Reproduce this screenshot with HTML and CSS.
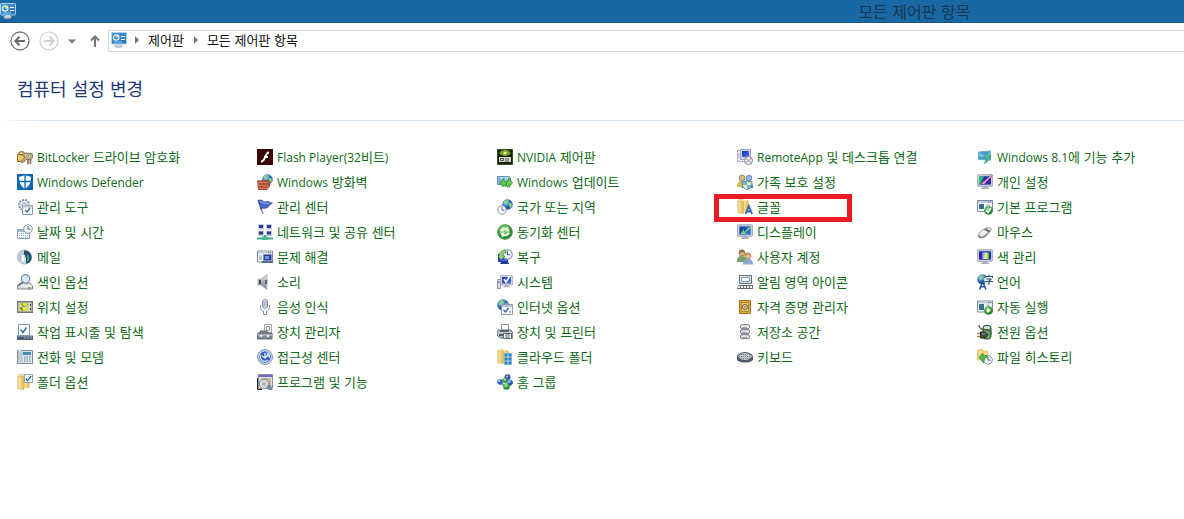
FILE: index.html
```html
<!DOCTYPE html>
<html lang="ko">
<head>
<meta charset="utf-8">
<title>모든 제어판 항목</title>
<link rel="stylesheet" href="styles.css">
</head>
<body>
<svg class="defs" aria-hidden="true">
  <defs>
    <linearGradient id="gold" x1="0" x2="1"><stop offset="0" stop-color="#f9ebb0"/><stop offset="1" stop-color="#dfb850"/></linearGradient>
    <linearGradient id="screen" x1="0" y1="0" x2="1" y2="1"><stop offset="0" stop-color="#1b2cb8"/><stop offset="1" stop-color="#4a78e8"/></linearGradient>
    <linearGradient id="panel" x1="0" y1="0" x2="1" y2="1"><stop offset="0" stop-color="#4a9bd8"/><stop offset="1" stop-color="#2173b8"/></linearGradient>
    <linearGradient id="steel" x1="0" y1="0" x2="0" y2="1"><stop offset="0" stop-color="#e2e6ea"/><stop offset="1" stop-color="#727c88"/></linearGradient>
    <radialGradient id="ball" cx=".35" cy=".3"><stop offset="0" stop-color="#cdeaff"/><stop offset=".5" stop-color="#4b9bdc"/><stop offset="1" stop-color="#1c4d9c"/></radialGradient>
    <radialGradient id="leaf" cx=".4" cy=".3"><stop offset="0" stop-color="#b7eca0"/><stop offset="1" stop-color="#288a2e"/></radialGradient>
    <linearGradient id="rainbow"><stop offset="0" stop-color="#e638d8"/><stop offset=".3" stop-color="#8bd9f5"/><stop offset=".6" stop-color="#fff25c"/><stop offset="1" stop-color="#28b848"/></linearGradient>
    <symbol id="cpl" viewBox="0 0 16 16">
      <ellipse cx="7.500" cy="14" rx="4" ry="1.800" fill="#b9bfc4"/><path d="M6 11h4v3H6z" fill="#d9dde0"/>
      <rect x=".5" y=".5" width="15" height="11.500" rx=".8" fill="url(#panel)" stroke="#a7d4f2"/>
      <circle cx="5.200" cy="5.500" r="2.700" fill="none" stroke="#e4f4fc" stroke-width="1.200"/><path d="M5 5.500V3A2.500 2.500 0 0 1 7.500 5.500z" fill="#f5d65a"/>
      <path d="M10 4.500h4M10 7.500h4" stroke="#fff" stroke-width="1.200"/><path d="M3 10h8" stroke="#8ec7ee"/>
    </symbol>
    <symbol id="clock" viewBox="0 0 10 10"><circle cx="5" cy="5" r="4.300" fill="#f5f8fb" stroke="#8796a8"/><path d="M5 2v3.200h2.500" fill="none" stroke="#52667d"/></symbol>
    <symbol id="globe" viewBox="0 0 12 12"><circle cx="6" cy="6" r="5.500" fill="url(#ball)" stroke="#5c96c8" stroke-width=".6"/><path d="M3 2l3-1 1 2-2 2-3 1zM7 5l3-1 1 3-2 3-1-2z" fill="#8ccf7c"/></symbol>
    <symbol id="pc" viewBox="0 0 16 16"><path d="M6 12h4v1.500h2V15H4v-1.500h2z" fill="#aab0b8"/><rect x=".7" y=".8" width="14.600" height="11.400" rx=".5" fill="#d5d8df" stroke="#9da2ad"/><path d="M2.500 2.500h11v8h-11z" fill="url(#screen)"/></symbol>
    <symbol id="window" viewBox="0 0 16 12"><path d="M.5.500h15v11H.5z" fill="#f8fafc" stroke="#7d8a9b"/><path d="M1 1h14v2H1z" fill="#c0ccd9"/><path d="M11 2h1M13 2h1" stroke="#54657a"/></symbol>
    <symbol id="tick" viewBox="0 0 10 10"><path d="M.5.500h9v9h-9z" fill="#fff" stroke="#8290a5"/><path d="M2 5l2 2.500L8 2" fill="none" stroke="#245fa9" stroke-width="1.400"/></symbol>
    <symbol id="folder" viewBox="0 0 14 16"><path d="M1 1l5-1v14l-5 1z" fill="#f7e7a6" stroke="#d5b55b" stroke-width=".6"/><path d="M6 1.500h6.500V14H6z" fill="url(#gold)"/><path d="M1 3l6-1v13.500L1 15z" fill="url(#gold)" stroke="#d1a946" stroke-width=".5"/></symbol>
  </defs>
</svg>

<header class="titlebar">
  <svg class="titlebar-icon" viewBox="0 0 16 16"><use href="#cpl"/></svg>
  <div class="titlebar-text">모든 제어판 항목</div>
</header>

<nav class="toolbar" aria-label="탐색">
  <button class="nav-button" aria-label="뒤로"><svg viewBox="0 0 20 20"><circle cx="10" cy="10" r="9" fill="none" stroke="#777" stroke-width="1.300"/><path d="M15 10H6M9.500 5.800L5.300 10l4.200 4.200" fill="none" stroke="#666" stroke-width="2"/></svg></button>
  <button class="nav-button" aria-label="앞으로"><svg viewBox="0 0 20 20"><circle cx="10" cy="10" r="9" fill="none" stroke="#cdcdcd" stroke-width="1.200"/><path d="M5 10h9M10.500 5.800l4.200 4.200-4.200 4.200" fill="none" stroke="#cfcfcf" stroke-width="2"/></svg></button>
  <button class="small-button" aria-label="최근 위치"><svg viewBox="0 0 8 14"><path d="M0 5.500h8L4 9.500z" fill="#777"/></svg></button>
  <button class="small-button up" aria-label="위로"><svg viewBox="0 0 10 14"><path d="M5 13V3M1 6.500l4-4 4 4" fill="none" stroke="#777" stroke-width="2"/></svg></button>
  <div class="address">
    <svg class="icon" viewBox="0 0 16 16"><use href="#cpl"/></svg>
    <svg class="chevron" viewBox="0 0 4 8"><path d="M0 0l4 4-4 4z" fill="#777"/></svg>
    <a href="#">제어판</a>
    <svg class="chevron" viewBox="0 0 4 8"><path d="M0 0l4 4-4 4z" fill="#777"/></svg>
    <a href="#">모든 제어판 항목</a>
  </div>
</nav>

<main>
  <h1>컴퓨터 설정 변경</h1>
  <ul class="items">
    <li><a href="#"><svg class="icon" viewBox="0 0 16 16"><path d="M2 6V4a3 3 0 0 1 5 0v2" fill="none" stroke="#b08c36" stroke-width="1.600"/><path d="M.5 5.500h7v7h-7z" fill="#e5b443" stroke="#9c7221"/><path d="M1 8h6M1 10h6" stroke="#f8df8c"/><path d="M5 5.500l4-1.500 6 .5 1 4-3 2.500-3-1-5 4-1-1.500 4-4z" fill="#c5b88e" stroke="#6d5c35" stroke-width=".8"/><circle cx="12.500" cy="7" r="1.300" fill="#fff" stroke="#6d5c35" stroke-width=".6"/><path d="M11 10v5.500M13.500 10v5" stroke="#7c6639" stroke-width="1.500"/></svg><span class="latin">BitLocker</span> 드라이브 암호화</a></li>
    <li><a href="#"><svg class="icon" viewBox="0 0 16 16"><path d="M0 0h16v16H0z" fill="#3b0808"/><path d="M12 3.500c-4 0-3.500 9-8 9M7 8h4" fill="none" stroke="#fff" stroke-width="2"/></svg><span class="latin">Flash Player(32</span>비트<span class="latin">)</span></a></li>
    <li><a href="#"><svg class="icon" viewBox="0 0 16 16"><path d="M.5.500h15v15H.5z" fill="#182008" stroke="#38521c"/><path d="M2 4c3-4 9-4 12 0-3 4-9 4-12 0z" fill="#79a51c"/><circle cx="8" cy="4" r="1.600" fill="#efffd0"/><path d="M2 8h12v5H2z" fill="#d6d9cc"/><path d="M3.500 9.500h3v2h-3zM8 10h4M8 12h4" fill="none" stroke="#4b5244"/></svg><span class="latin">NVIDIA</span> 제어판</a></li>
    <li><a href="#"><svg class="icon" viewBox="0 0 16 16"><path d="M.5 1.500h8v11h-8z" fill="#f4f6fb" stroke="#8a94a8" stroke-dasharray="2 1"/><path d="M1.500 5h1M1.500 7h1M1.500 9h1" stroke="#6279b2"/><path d="M3.500.500h10v10h-10z" fill="#d3d8e5" stroke="#9aa3b5"/><path d="M5 2h7v6H5z" fill="url(#screen)"/><circle cx="11.500" cy="11.500" r="4" fill="#f5f6f8" stroke="#7b818b"/><path d="M9 9.500l2 2-2 2M14 9.500l-2 2 2 2" fill="none" stroke="#6a727e"/></svg><span class="latin">RemoteApp</span> 및 데스크톱 연결</a></li>
    <li><a href="#"><svg class="icon" viewBox="0 0 16 16"><path d="M1.500 3L13.500 2v9l-12-.5z" fill="#4c9acb" stroke="#6daac8"/><path d="M2 4l5 2 6-3v5L7 9 2 7z" fill="#79bde2"/><path d="M10 4l4 4-2 .5c0 3-2 5-5 6 2-2 2-4 1.500-5.500L6 9z" fill="#50b9a0" stroke="#248d78" stroke-width=".6"/></svg><span class="latin">Windows 8.1</span>에 기능 추가</a></li>

    <li><a href="#"><svg class="icon" viewBox="0 0 16 16"><path d="M0 0h16v16H0z" fill="#0868b5"/><path d="M8 1.200l5.800 1.500c.3 5-.8 9-5.800 12.100C3 11.700 2 7.700 2.200 2.700z" fill="#fff"/><path d="M8 1v14M2 7.500h12" stroke="#0868b5" stroke-width="1.300"/></svg><span class="latin">Windows Defender</span></a></li>
    <li><a href="#"><svg class="icon" viewBox="0 0 16 16"><use href="#globe" x="5" y="0" width="11" height="11"/><path d="M0 6.500L9 6l4 1v5l-3 4H1z" fill="#a9452e"/><path d="M0 8.500h12M0 11.500h12M1 14.500h10M3 6.500v2M7 6.500v2M2 9v2M5 9v2M9 9v2M3 12v2M7 12v2M10 12v2" stroke="#e3a087" stroke-width=".6"/></svg><span class="latin">Windows</span> 방화벽</a></li>
    <li><a href="#"><svg class="icon" viewBox="0 0 16 16"><path d="M.5 2.500h11l2 1v7H.5z" fill="#81b5dc" stroke="#6792b2"/><path d="M1 3l7 4 5-4" fill="#a9daf0"/><path d="M3 9l4-5v2.500c3 .5 3 4 1 6-.5-1-1-1.500-2-1.500v2zM15.500 8.500l-4-4.500V6.500c-3 .5-3 5-1 7 .2-1.500.5-2 1.500-2v2z" fill="#65c95b" stroke="#25812c" stroke-width=".7"/></svg><span class="latin">Windows</span> 업데이트</a></li>
    <li><a href="#"><svg class="icon" viewBox="0 0 16 16"><circle cx="5" cy="4" r="3" fill="#d5b980" stroke="#857050" stroke-width=".7"/><circle cx="12" cy="4" r="2.800" fill="#8eb8df" stroke="#426d9b" stroke-width=".7"/><path d="M0 13c0-5 2-6 5-6s5 2 5 7z" fill="#d9bb58"/><path d="M5 14c0-6 2-7 6-7s5 3 5 7z" fill="#3787ba"/><path d="M5 7.500c2 .5 4 0 5-1 1 1 3 1.500 5 1 0 4-1 7-5 8.500-4-1.500-5-4.500-5-8.500z" fill="#e5edba" stroke="#397a8e" stroke-width=".8"/><path d="M10 6.500V16c3-1.500 4-3 4.500-5H5.500L5 7.500c2 .5 4 0 5-1z" fill="#58a4d4" opacity=".8"/></svg>가족 보호 설정</a></li>
    <li><a href="#"><svg class="icon" viewBox="0 0 16 16"><use href="#pc"/><path d="M2 2.500h11L4 10.500H2z" fill="#24bb79"/><path d="M7 2.500h7v8H3z" fill="#3427ab"/><path d="M4 9.500c2 0 1-2 3-2L14.500.5l1 1-7 7c0 2-3 2-4.500 1z" fill="#eec1d5" stroke="#a2437b" stroke-width=".7"/></svg>개인 설정</a></li>

    <li><a href="#"><svg class="icon" viewBox="0 0 16 16"><circle cx="7" cy="6" r="5" fill="#e8edf3" stroke="#8d9aaa" stroke-width="2" stroke-dasharray="2 1"/><circle cx="7" cy="6" r="2" fill="#fff" stroke="#8d9aaa"/><path d="M5.500 6.500h10v9h-10z" fill="#f7fafc" stroke="#8d9cae"/><path d="M6 7.500h9" stroke="#b9c8d9" stroke-width="2"/><path d="M8 11l2 2 3-4" fill="none" stroke="#47699a" stroke-width="1.300"/></svg>관리 도구</a></li>
    <li><a href="#"><svg class="icon" viewBox="0 0 16 16"><path d="M1 1l5 14" stroke="#8690a3" stroke-width="1.500"/><path d="M1.500 1.500c4-2 5 3 8 1 2-.5 4 2 6 1.500C12 5 13 8 9 9c-3 1-3-1-5 1.500z" fill="#4a68c8" stroke="#2b419c" stroke-width=".8"/><path d="M3 3c3-1 5 3 9 1" fill="none" stroke="#9db4ef"/></svg>관리 센터</a></li>
    <li><a href="#"><svg class="icon" viewBox="0 0 16 16"><use href="#globe" x="5" y="0" width="11" height="11"/><use href="#clock" x="0" y="6" width="10" height="10"/></svg>국가 또는 지역</a></li>
    <li class="highlighted"><a href="#"><svg class="icon" viewBox="0 0 16 16"><use href="#folder" x="0" y="0" width="13" height="15"/><path d="M8.500 15l3.300-8 3.300 8M9.700 12.500h4" fill="none" stroke="#3467b5" stroke-width="1.900"/></svg>글꼴</a></li>
    <li><a href="#"><svg class="icon" viewBox="0 0 16 16"><use href="#window" x="0" y="1" width="16" height="12"/><path d="M2 5h5v5H2z" fill="#376d91"/><path d="M9 5h4v6H9z" fill="#c9d4df"/><circle cx="11.500" cy="11.500" r="4" fill="url(#leaf)" stroke="#398840" stroke-width=".6"/><path d="M9 11.500l2 2L14 9" fill="none" stroke="#fff" stroke-width="1.500"/></svg>기본 프로그램</a></li>

    <li><a href="#"><svg class="icon" viewBox="0 0 16 16"><path d="M.5 5.500h12v9H.5z" fill="#f7fbff" stroke="#8ba0b8"/><path d="M1 6h11v2H1z" fill="#a5bacf"/><path d="M2 9.500h9M2 11.500h9M2 13.500h9" stroke="#87add3" stroke-dasharray="1 1"/><use href="#clock" x="6" y="0" width="10" height="10"/></svg>날짜 및 시간</a></li>
    <li><a href="#"><svg class="icon" viewBox="0 0 16 16"><path d="M1 0h6v5.500H1zM9 0h6v5.500H9zM1 6.500h6V12H1zM9 6.500h6V12H9z" fill="#c4cbe0"/><path d="M2 1h4v3H2zM10 1h4v3h-4zM2 7.500h4v3H2zM10 7.500h4v3h-4z" fill="#263a9c"/><path d="M0 14.500h16M8 11v4" stroke="#43ae87" stroke-width="2"/><path d="M5 12.500h6V16H5z" fill="#4ab790"/></svg>네트워크 및 공유 센터</a></li>
    <li><a href="#"><svg class="icon" viewBox="0 0 16 16"><circle cx="8" cy="8" r="7.300" fill="url(#leaf)" stroke="#3c9440"/><path d="M3 7.500c.5-3 3.500-4.500 6-3.500l1.500-1.500L13 7.500H8L9.500 6C8 5.500 6.500 6 6 7.500zM13 8.500c-.5 3-3.500 4.500-6 3.500l-1.500 1.500L3 8.500h5L6.500 10c1.500.5 3 0 3.500-1.500z" fill="#e9f9df"/></svg>동기화 센터</a></li>
    <li><a href="#"><svg class="icon" viewBox="0 0 16 16"><use href="#pc"/><path d="M2.500 2.500h11v8h-11z" fill="#2a6be0"/><path d="M3 3.500h6v6.500H3z" fill="#174796"/><path d="M13 2.500L7 8V5L3.500 10H10L8 8.500 14 4z" fill="#77da6c"/></svg>디스플레이</a></li>
    <li><a href="#"><svg class="icon" viewBox="0 0 16 16"><path d="M1 12c1-4 5-7 9-8.500 3-.5 5 1 4 3-1 2-4 5-7 7-3 1-6 .5-6-1.500z" fill="url(#steel)" stroke="#888" stroke-width=".6"/><path d="M2 11c1-3 4-5 7-6l1 4-5 4z" fill="#f1f1f1"/><path d="M9 4l2.500 4M7 5.500l6 2" stroke="#555"/></svg>마우스</a></li>

    <li><a href="#"><svg class="icon" viewBox="0 0 16 16"><circle cx="7.500" cy="8" r="7" fill="#edf2f4" stroke="#9aabb8"/><path d="M7 1a7 7 0 0 0-5 12l5-4z" fill="#bdcbd4"/><path d="M7 1.500c4-.5 8 3 7.500 8-.5 3-3 5-5.500 5V9L7 6z" fill="#254966"/><path d="M10 5c2 1 3 3 2 6l-2 2z" fill="#38a58d"/><path d="M4 5l4 1v8l-4-2z" fill="#fff" stroke="#91a1ae" stroke-width=".6"/></svg>메일</a></li>
    <li><a href="#"><svg class="icon" viewBox="0 0 16 16"><use href="#window" x="0" y="1" width="16" height="13"/><path d="M2 6h3v5H2z" fill="#b8c7dc"/><path d="M6.500 5.500h8v6h-8z" fill="#283f9d" stroke="#8691b0"/><path d="M8 7h4v3H8z" fill="#6594ed"/><path d="M5 13h11" stroke="#5a6b94" stroke-width="2"/></svg>문제 해결</a></li>
    <li><a href="#"><svg class="icon" viewBox="0 0 16 16"><path d="M1 5h10v7l1 3H3l1-2H1z" fill="#273c99"/><path d="M2 6h8v6H2z" fill="url(#screen)"/><use href="#clock" x="5" y="0" width="11" height="11"/><path d="M2 7c0-4 3-6 7-6v3C6 4 6 5 6 7h2l-4 4-3-4z" fill="#8fd27d" stroke="#2a7d32" stroke-width=".6"/></svg>복구</a></li>
    <li><a href="#"><svg class="icon" viewBox="0 0 16 16"><circle cx="5" cy="4" r="3" fill="#d9b27b" stroke="#765431" stroke-width=".6"/><path d="M2 4c0-5 6-4 6 0L6 3z" fill="#8c6740"/><path d="M0 13c0-5 2-6 5-6s5 2 5 6z" fill="#78a26a"/><circle cx="11" cy="7" r="3" fill="#e6bd91" stroke="#956d48" stroke-width=".6"/><path d="M8 7c0-5 6-4 6 0l-3-2z" fill="#b48b4c"/><path d="M6 15.500c0-4 2-5.500 5-5.500s5 1.500 5 5.500z" fill="#8aa9cc"/></svg>사용자 계정</a></li>
    <li><a href="#"><svg class="icon" viewBox="0 0 16 16"><use href="#pc"/><path d="M2 2.500h12v8H2z" fill="#1e2cad"/><path d="M5 3.500h7V10H5z" fill="url(#rainbow)"/></svg>색 관리</a></li>

    <li><a href="#"><svg class="icon" viewBox="0 0 16 16"><path d="M3 9h10l2.500 3v3H.5v-3z" fill="#d7dbdf" stroke="#7c858d"/><path d="M1 12h14" stroke="#fff"/><path d="M11 14h3" stroke="#3e8b43"/><circle cx="8.500" cy="4.800" r="4.200" fill="#d8ebfa" stroke="#7a91aa" stroke-width="1.200"/><path d="M6 8l-5 4" stroke="#77818c" stroke-width="1.800"/></svg>색인 옵션</a></li>
    <li><a href="#"><svg class="icon" viewBox="0 0 16 16"><path d="M1 5h3l6-4.500v15L4 11H1z" fill="url(#steel)" stroke="#9198a2" stroke-width=".6"/><path d="M2 6h2v4H2z" fill="#48505a"/><path d="M9 .5c2.500 3 2.500 12 0 15z" fill="#bcc2c8"/><path d="M9 6v4" stroke="#5d636b" stroke-width="2"/></svg>소리</a></li>
    <li><a href="#"><svg class="icon" viewBox="0 0 16 16"><path d="M.5 5.500h3v9h-3z" fill="#dedfe5" stroke="#8d929e"/><path d="M1 8h2" stroke="#5f687c"/><use href="#pc" x="3" y="0" width="13" height="15"/><path d="M7 5l2 3 4-6" fill="none" stroke="#fff" stroke-width="1.700"/></svg>시스템</a></li>
    <li><a href="#"><svg class="icon" viewBox="0 0 16 16"><path d="M2.500 1.500h12v8h-12z" fill="#dbe5ed" stroke="#626f7b"/><path d="M4.500 3.500h8v4h-8z" fill="#f5faff" stroke="#8398ad"/><path d="M1 11h15v4H0z" fill="#626b74"/><path d="M1 13h14" stroke="#fff" stroke-width="2" stroke-dasharray="2 1"/></svg>알림 영역 아이콘</a></li>
    <li><a href="#"><svg class="icon" viewBox="0 0 16 16"><use href="#globe" x="0" y="0" width="11" height="11"/><path d="M7 2h9v8H8z" fill="#fff" opacity=".75"/><path d="M8 4V2.500h7.500V4M12 .5v2M9.500 5h4.500l-2 2v3h-1.500M8 7.500h8" fill="none" stroke="#294d85" stroke-width="1.100"/><path d="M2.500 15.500l3.200-8 3.200 8M4 12.800h4" fill="none" stroke="#28569a" stroke-width="1.500"/></svg>언어</a></li>

    <li><a href="#"><svg class="icon" viewBox="0 0 16 16"><path d="M.7 2.700h14.600v10.600H.7z" fill="#d6d8d2" stroke="#747974" stroke-width="1.400"/><path d="M2.500 4h9v8h-9z" fill="#dfdd50"/><path d="M3 10l3-3 2 1 3-3M5 4v8" fill="none" stroke="#6b882e" stroke-width="1.200"/><path d="M4 6l3 4 3-5" fill="none" stroke="#fff8aa"/><path d="M13.500 5v2M13.500 9v2" stroke="#363c39"/></svg>위치 설정</a></li>
    <li><a href="#"><svg class="icon" viewBox="0 0 16 16"><rect x="5.500" y=".5" width="5" height="9" rx="2.500" fill="#e9edf6" stroke="#8490aa"/><path d="M6 3h4M6 5h4M6 7h4" stroke="#8a97b4"/><path d="M3.500 6v2.500c0 2 2 3.500 3 3.500v3.500h3V12c1 0 3-1.500 3-3.500V6" fill="none" stroke="#7e8ba8"/></svg>음성 인식</a></li>
    <li><a href="#"><svg class="icon" viewBox="0 0 16 16"><use href="#globe" x="0" y="0" width="12" height="12"/><path d="M4.500 5.500h11v10h-11z" fill="#f7fafc" stroke="#879caf"/><path d="M5 7h10" stroke="#b3c4d6" stroke-width="2"/><path d="M6.500 11l2 2 3-4" fill="none" stroke="#335fa6" stroke-width="1.400"/><path d="M12 13h2" stroke="#687b91"/></svg>인터넷 옵션</a></li>
    <li><a href="#"><svg class="icon" viewBox="0 0 16 16"><path d="M2.500 1.500h11v13h-11z" fill="#d8aa3d" stroke="#9d7526"/><path d="M4.500 3.500h7v9h-7z" fill="#e9c86d" stroke="#af8636"/><circle cx="8" cy="8" r="2.500" fill="#e6e0ba" stroke="#725c2b"/><circle cx="8" cy="8" r=".8" fill="#5a5135"/></svg>자격 증명 관리자</a></li>
    <li><a href="#"><svg class="icon" viewBox="0 0 16 16"><use href="#window" x="0" y="1" width="16" height="13"/><path d="M2 5h5v6H2z" fill="#397387"/><path d="M9 6h4M9 8h4" stroke="#a4b3c1"/><circle cx="11.500" cy="11.500" r="4" fill="url(#leaf)" stroke="#398840" stroke-width=".6"/><path d="M10 9l4 2.500-4 2.500z" fill="#fff"/></svg>자동 실행</a></li>

    <li><a href="#"><svg class="icon" viewBox="0 0 16 16"><path d="M1.500.500h11v11h-11z" fill="#fff" stroke="#8492a7"/><path d="M3.500 5.500l2.500 3 3.500-5" fill="none" stroke="#2a75bd" stroke-width="1.500"/><path d="M0 11.500h16V16H0z" fill="#4b5f79"/><path d="M1 12h14" stroke="#a6b4c4"/><path d="M7 14h2M10 14h2M13 14h2" stroke="#9fb0c4"/></svg>작업 표시줄 및 탐색</a></li>
    <li><a href="#"><svg class="icon" viewBox="0 0 16 16"><path d="M7.500.500h7v8h-7z" fill="#f5f7f2" stroke="#a4aca3"/><path d="M9.500 2.500h3v4h-3z" fill="none" stroke="#8e9c86"/><path d="M3 9V7h7v2M1 9h14v6H0z" fill="#828c96" stroke="#5e6872"/><path d="M1 11h14" stroke="#ced4da"/><path d="M4 11v2M11 11v2" stroke="#fff" stroke-width="1.500"/></svg>장치 관리자</a></li>
    <li><a href="#"><svg class="icon" viewBox="0 0 16 16"><path d="M4.500.500h7V7h-7z" fill="#f8fafc" stroke="#8993a0"/><path d="M1 6h13l2 3v5H3L0 11V8z" fill="#bfc5ca" stroke="#656e78"/><path d="M3 7h9" stroke="#4c555e" stroke-width="1.600"/><path d="M2 10h4v2H2z" fill="#555f68"/><path d="M6.500 9.500h8v5h-8z" fill="#f1f3f5" stroke="#59636d"/><circle cx="10.500" cy="12" r="1.700" fill="#cedbea" stroke="#5e7083"/></svg>장치 및 프린터</a></li>
    <li><a href="#"><svg class="icon" viewBox="0 0 16 16"><rect x="3.500" y=".7" width="9" height="4" rx="1.500" fill="#eceef0" stroke="#747a80"/><rect x="3.500" y="5.700" width="9" height="4" rx="1.500" fill="#dfe1e4" stroke="#747a80"/><rect x="3.500" y="10.700" width="9" height="4" rx="1.500" fill="#dfe1e4" stroke="#747a80"/><path d="M5 3.500h5M5 8.500h5M5 13.500h5" stroke="#a2a6ab"/></svg>저장소 공간</a></li>
    <li><a href="#"><svg class="icon" viewBox="0 0 16 16"><rect x="6" y="1.500" width="8" height="13.500" rx="2.500" fill="#5eac5d" stroke="#334d35"/><ellipse cx="10" cy="3.500" rx="3" ry="1.500" fill="#d8e3d6"/><path d="M7.500 6v8" stroke="#a5dc9c"/><path d="M2 1c0 4 4 5 8 5s5 3 3 5" fill="none" stroke="#4c5450" stroke-width="1.300"/><path d="M3.500 8H8l2.500 2.500v1L8 14H3.500z" fill="#474d48" stroke="#202820"/><path d="M0 9.500h3M0 12.500h3" stroke="#ad8543" stroke-width="1.500"/><path d="M5 10h3" stroke="#9ba497"/></svg>전원 옵션</a></li>

    <li><a href="#"><svg class="icon" viewBox="0 0 16 16"><path d="M.5 1.500h15v13H.5z" fill="#e1e9ef" stroke="#7b8995"/><path d="M1 1h4v13H1z" fill="#f6f8fb" stroke="#9aa7b1" stroke-width=".6"/><path d="M2 2v11M4 2v11" stroke="#96a3b2"/><path d="M6 3h8v3H6z" fill="#468bab"/><path d="M7 8h7M7 10h7M7 12h7" stroke="#557e9e" stroke-width="1.200" stroke-dasharray="1.500 1"/></svg>전화 및 모뎀</a></li>
    <li><a href="#"><svg class="icon" viewBox="0 0 16 16"><circle cx="8" cy="8" r="7.400" fill="#d9e2f4" stroke="#7285b5"/><circle cx="8" cy="8" r="5.800" fill="#2e5cbc"/><path d="M4 5.500A4.500 4.500 0 0 0 11 11M9.500 3.700A4.500 4.500 0 0 1 12.300 9" fill="none" stroke="#dce7ff" stroke-width="1.200"/><path d="M5 7l3 2V4M8 9l3-3M11 4.500V7H9" fill="none" stroke="#fff" stroke-width="1.200"/></svg>접근성 센터</a></li>
    <li><a href="#"><svg class="icon" viewBox="0 0 16 16"><use href="#folder" x="0" y="0" width="13" height="15"/><path d="M7.500 4.500h7v11h-7z" fill="#307cb9" stroke="#79b9df"/><path d="M8 8h6M8 12h6M11 5v10" stroke="#b3ddf4"/></svg>클라우드 폴더</a></li>
    <li><a href="#"><svg class="icon" viewBox="0 0 16 16"><path d="M0 7c2-3 5-4 8-4s6 1 8 4v4c-2 2-5 2.500-8 2.500S2 13 0 11z" fill="#515968"/><path d="M1 7.500C3 5 5 4 8 4s5 1 7 3.500C13 10 11 11 8 11S3 10 1 7.500z" fill="#c4c9d5"/><path d="M4 5.500h9M2 7.500h12M4 9.500h9" stroke="#747d8f" stroke-dasharray="1 1"/></svg>키보드</a></li>
    <li><a href="#"><svg class="icon" viewBox="0 0 16 16"><path d="M.5 1l5-.5L6 2h4.500v9H.5z" fill="#f5dc82" stroke="#d6b34c" stroke-width=".7"/><use href="#clock" x="6" y="6" width="10" height="10"/><path d="M2 8.500l4-4.500v2.500c3-.5 4 0 5 1.500-2 0-4 1-4 4-.5.500-.5 1-.5 2z" fill="#59ba49" stroke="#28822c" stroke-width=".7"/></svg>파일 히스토리</a></li>

    <li><a href="#"><svg class="icon" viewBox="0 0 16 16"><use href="#folder" x="0" y="0" width="14" height="16"/><use href="#tick" x="7" y="0" width="9" height="9"/></svg>폴더 옵션</a></li>
    <li><a href="#"><svg class="icon" viewBox="0 0 16 16"><path d="M1.500.500h14v14h-14z" fill="#e1dfec" stroke="#8c89a5"/><path d="M2 2h13" stroke="#7565b1" stroke-width="2"/><path d="M.5 4v11.500H5" fill="none" stroke="#222"/><path d="M4 4h10v10H4z" fill="#c1b59b"/><circle cx="7" cy="10" r="4.800" fill="#d5d9d9" stroke="#858b8c"/><circle cx="7" cy="10" r="1.200" fill="#fff" stroke="#858b8c"/><path d="M10 11h4l1.500 5H11z" fill="#788896"/></svg>프로그램 및 기능</a></li>
    <li><a href="#"><svg class="icon" viewBox="0 0 16 16"><path d="M3 8l7-5 3 8-4 2z" fill="none" stroke="#66a2b0" stroke-width="2"/><circle cx="3" cy="8" r="2.800" fill="#3e61b5"/><circle cx="10.500" cy="3.300" r="3" fill="#3555a5"/><circle cx="8" cy="6.500" r="2.500" fill="url(#leaf)"/><circle cx="13" cy="8.500" r="2.800" fill="url(#ball)"/><circle cx="9.500" cy="12.500" r="3.300" fill="url(#leaf)"/><circle cx="2.300" cy="7" r=".9" fill="#c7d9fa"/><circle cx="10" cy="2.500" r=".9" fill="#c7d9fa"/></svg>홈 그룹</a></li>
  </ul>
</main>
</body>
</html>
```

FILE: styles.css
```css
* { box-sizing: border-box; }

body {
  margin: 0;
  background: #fff;
  color: #111;
  font: 13px/25px "Noto Sans CJK KR", "Noto Sans", sans-serif;
}

a { color: inherit; text-decoration: none; }

.defs { position: absolute; width: 0; height: 0; }

.icon { width: 16px; height: 16px; flex: none; }

.latin {
  font-family: "Open Sans", "Noto Sans", sans-serif;
  font-size: 12px;
  line-height: 1;
}

.titlebar {
  display: grid;
  grid-template-columns: 29fr 11fr;
  align-items: center;
  height: 23px;
  background: #1968a3;
  border-bottom: 1px solid #175582;
}

.titlebar-icon { width: 16px; height: 16px; }

.titlebar-text {
  color: #173652;
  font-size: 16px;
  line-height: 22px;
  white-space: nowrap;
}

.toolbar {
  display: flex;
  align-items: center;
  padding: 7px 0 0 10px;
}

.toolbar button {
  display: flex;
  padding: 0;
  border: 0;
  background: none;
}

.nav-button { margin-right: 9px; }
.nav-button svg { width: 20px; height: 20px; }
.small-button svg { width: 8px; height: 14px; }
.small-button.up { margin: 0 8px 0 14px; }
.small-button.up svg { width: 10px; }

.address {
  display: flex;
  flex: 1;
  align-items: center;
  height: 22px;
  padding: 0 0 2px 2px;
  border: 1px solid #d9d9d9;
  border-right: 0;
  line-height: 18px;
  white-space: nowrap;
}

.chevron { width: 4px; height: 8px; margin: 0 9px 0 8px; }
a + .chevron { margin-left: 10px; }

h1 {
  margin: 0;
  padding: 23px 17px 18px;
  color: #1b3a78;
  font-size: 18px;
  font-weight: 400;
  line-height: 27px;
  border-bottom: 1px solid;
  border-image: linear-gradient(to right, #fff, #d5e2ec 40px) 1;
}

.items {
  display: grid;
  grid-template-columns: repeat(auto-fill, 200px);
  grid-auto-rows: 25px;
  column-gap: 40px;
  margin: 0;
  padding: 23px 0 24px 17px;
  color: #0f6a17;
  list-style: none;
}

.items a { white-space: nowrap; }

.items .icon {
  margin-right: 4px;
  vertical-align: -3px;
}

.highlighted { position: relative; }

.highlighted::after {
  content: "";
  position: absolute;
  inset: 0 85px -3px -23px;
  border: 5px solid #e81b23;
  pointer-events: none;
}
```
